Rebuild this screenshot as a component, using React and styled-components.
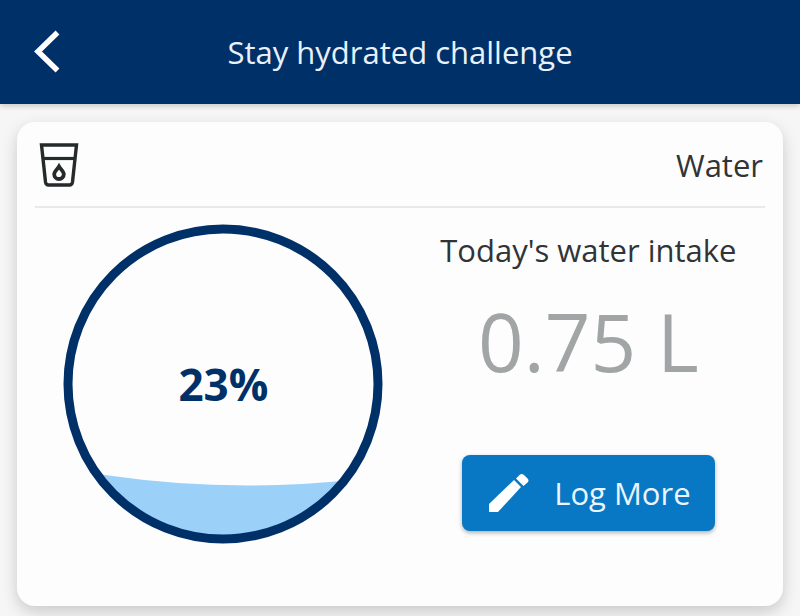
import React from "react";
import styled, { createGlobalStyle } from "styled-components";

const GlobalStyle = createGlobalStyle`
  *, *::before, *::after { box-sizing: border-box; }
  body {
    margin: 0;
    background: #f6f6f6;
    color: #303436;
    font-family: "Open Sans", "Noto Sans", sans-serif;
  }
`;

const Screen = styled.div`
  min-height: 100vh;
  display: flex;
  flex-direction: column;
`;

const TopBar = styled.header`
  display: grid;
  grid-template-columns: 64px 1fr 64px;
  align-items: center;
  height: 104px;
  padding: 0 16px;
  background: #003068;
  box-shadow: 0 2px 6px rgba(0, 0, 0, 0.2);
`;

const BackButton = styled.button`
  display: flex;
  align-items: center;
  justify-content: center;
  width: 64px;
  height: 64px;
  padding: 0;
  border: 0;
  background: none;
  color: #fff;
  cursor: pointer;
`;

const Title = styled.h1`
  margin: 0;
  color: #e9f1fa;
  font-size: 31px;
  font-weight: 400;
  line-height: 40px;
  text-align: center;
`;

const Card = styled.main`
  flex: 1;
  margin: 18px 17px 10px;
  padding: 0 18px 24px;
  border-radius: 18px;
  background: #fdfdfd;
  box-shadow: 0 6px 16px rgba(0, 0, 0, 0.18);
`;

const CardHeader = styled.div`
  display: flex;
  align-items: center;
  justify-content: space-between;
  height: 86px;
  padding: 2px 2px 0 4px;
  border-bottom: 2px solid #e9e9e9;
`;

const CardTitle = styled.h2`
  margin: 0;
  font-size: 31px;
  font-weight: 400;
  line-height: 40px;
`;

const CardBody = styled.div`
  display: grid;
  grid-template-columns: 32fr 30fr;
  padding-top: 16px;
`;

const Gauge = styled.div`
  display: grid;
  place-items: center;
  justify-self: center;
  width: 100%;
  max-width: 320px;

  > * { grid-area: 1 / 1; }
`;

const GaugeDrawing = styled.svg`
  display: block;
  width: 100%;
`;

const Percent = styled.span`
  color: #003068;
  font-size: 44px;
  font-weight: 700;
  line-height: 56px;
`;

const Intake = styled.section`
  display: flex;
  flex-direction: column;
  align-items: center;
`;

const IntakeLabel = styled.h3`
  margin: 6px 0 31px;
  font-size: 31px;
  font-weight: 400;
  line-height: 40px;
  white-space: nowrap;
`;

const Amount = styled.p`
  margin: 0 0 74px;
  color: #a1a5a5;
  font-size: 80px;
  font-weight: 400;
  line-height: 80px;
  white-space: nowrap;
`;

const LogButton = styled.button`
  display: flex;
  align-items: center;
  gap: 18px;
  height: 76px;
  padding: 0 24px 0 22px;
  border: 0;
  border-radius: 8px;
  background: #0877c4;
  box-shadow: 0 2px 4px rgba(0, 0, 0, 0.3);
  color: #e9f5ff;
  font-family: inherit;
  font-size: 31px;
  line-height: 40px;
  white-space: nowrap;
  cursor: pointer;
`;

const BackIcon = () => (
  <svg width="32" height="48" viewBox="0 0 32 48" fill="none" aria-hidden="true">
    <path d="M25.500 4.500 6 23.500 25.500 42.500" stroke="currentColor" strokeWidth="5.500" />
  </svg>
);

const GlassIcon = () => (
  <svg width="40" height="44" viewBox="0 0 40 44" fill="none" stroke="#252a2b" aria-hidden="true">
    <path d="M2.500 2H37.500L33.500 39Q33 42 30.500 42H9.500Q7 42 6.500 39Z" strokeWidth="3.400" />
    <path d="M4 15.500H36" strokeWidth="3.200" />
    <path d="M20 23.500C18.500 26 15.200 28.600 15.200 31.200A4.800 4.800 0 0 0 24.800 31.200C24.800 28.600 21.500 26 20 23.500Z" strokeWidth="3.800" />
  </svg>
);

const PencilIcon = () => (
  <svg width="52" height="44" viewBox="0 0 52 44" fill="#fff" aria-hidden="true">
    <path d="M5 33 30 9 37 16 14 41H5Z" />
    <path d="M32 7.500 35.500 4Q37.500 2 40 4L43.500 7.500Q45.500 9.500 43.500 11.500L39.500 15Z" />
  </svg>
);

function WaterGauge({ percent }) {
  return (
    <Gauge role="img" aria-label={`${percent}% of the daily goal`}>
      <GaugeDrawing viewBox="0 0 320 320" aria-hidden="true">
        <defs>
          <clipPath id="vessel">
            <circle cx="160" cy="160" r="154" />
          </clipPath>
        </defs>
        <path d="M0 244Q20 248 42 251Q165 269 288 256L320 253V320H0Z" fill="#9bd0f8" clipPath="url(#vessel)" />
        <circle cx="160" cy="160" r="155" fill="none" stroke="#003068" strokeWidth="9" />
      </GaugeDrawing>
      <Percent>{percent}%</Percent>
    </Gauge>
  );
}

export default function App() {
  return (
    <>
      <GlobalStyle />
      <Screen>
        <TopBar>
          <BackButton type="button" aria-label="Back">
            <BackIcon />
          </BackButton>
          <Title>Stay hydrated challenge</Title>
        </TopBar>
        <Card>
          <CardHeader>
            <GlassIcon />
            <CardTitle>Water</CardTitle>
          </CardHeader>
          <CardBody>
            <WaterGauge percent={23} />
            <Intake>
              <IntakeLabel>Today's water intake</IntakeLabel>
              <Amount>0.75 L</Amount>
              <LogButton type="button">
                <PencilIcon />
                Log More
              </LogButton>
            </Intake>
          </CardBody>
        </Card>
      </Screen>
    </>
  );
}
